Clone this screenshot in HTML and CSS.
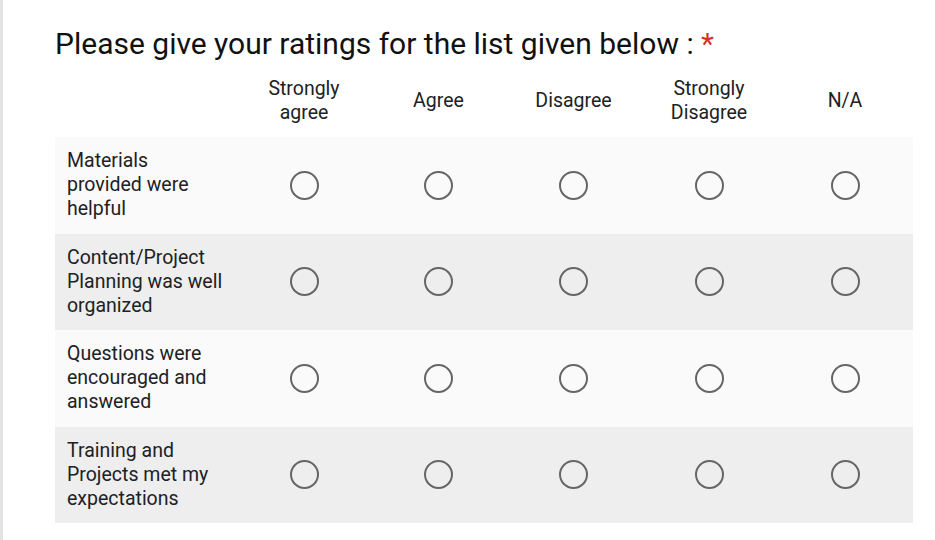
FILE: index.html
```html
<!DOCTYPE html>
<html>
<head>
<meta charset="utf-8">
<link rel="stylesheet" href="styles.css">
</head>
<body>
<div class="page">
  <h1 class="title">Please give your ratings for the list given below : <span class="req">*</span></h1>
  <div class="grid">
    <div class="head">
      <div class="cell label"></div>
      <div class="cell">Strongly<br>agree</div>
      <div class="cell">Agree</div>
      <div class="cell">Disagree</div>
      <div class="cell">Strongly<br>Disagree</div>
      <div class="cell">N/A</div>
    </div>
    <div class="row light">
      <div class="cell label">Materials<br>provided were<br>helpful</div>
      <div class="cell"><span class="radio"></span></div>
      <div class="cell"><span class="radio"></span></div>
      <div class="cell"><span class="radio"></span></div>
      <div class="cell"><span class="radio"></span></div>
      <div class="cell"><span class="radio"></span></div>
    </div>
    <div class="row dark">
      <div class="cell label">Content/Project<br>Planning was well<br>organized</div>
      <div class="cell"><span class="radio"></span></div>
      <div class="cell"><span class="radio"></span></div>
      <div class="cell"><span class="radio"></span></div>
      <div class="cell"><span class="radio"></span></div>
      <div class="cell"><span class="radio"></span></div>
    </div>
    <div class="row light">
      <div class="cell label">Questions were<br>encouraged and<br>answered</div>
      <div class="cell"><span class="radio"></span></div>
      <div class="cell"><span class="radio"></span></div>
      <div class="cell"><span class="radio"></span></div>
      <div class="cell"><span class="radio"></span></div>
      <div class="cell"><span class="radio"></span></div>
    </div>
    <div class="row dark">
      <div class="cell label">Training and<br>Projects met my<br>expectations</div>
      <div class="cell"><span class="radio"></span></div>
      <div class="cell"><span class="radio"></span></div>
      <div class="cell"><span class="radio"></span></div>
      <div class="cell"><span class="radio"></span></div>
      <div class="cell"><span class="radio"></span></div>
    </div>
  </div>
</div>
</body>
</html>
```
FILE: styles.css
```css
html, body {
  margin: 0;
  padding: 0;
  background: #ffffff;
}
body {
  font-family: Roboto, "Liberation Sans", sans-serif;
  color: #202124;
  width: 935px;
  height: 540px;
  overflow: hidden;
}
.page {
  border-left: 3px solid #e2e2e2;
  height: 540px;
  box-sizing: border-box;
  padding: 25px 0 0 52px;
}
.title {
  margin: 0;
  font-size: 30px;
  font-weight: 400;
  line-height: 38px;
  color: #111;
}
.req {
  color: #d93025;
}
.grid {
  width: 858px;
}
.head, .row {
  display: grid;
  grid-template-columns: 182px 134px 135px 135px 136px 136px;
  align-items: center;
  font-size: 19.5px;
  line-height: 24px;
}
.head {
  height: 74px;
  padding-top: 1px;
  box-sizing: border-box;
  text-align: center;
}
.row {
  height: 96.5px;
}
.row.light { background: #fafafa; }
.row.dark { background: #eeeeee; }
.cell {
  display: flex;
  justify-content: center;
  align-items: center;
}
.row .label, .head .label {
  justify-content: flex-start;
  padding-left: 12px;
}
.radio {
  display: block;
  width: 25px;
  height: 25px;
  border: 2.5px solid #666666;
  border-radius: 50%;
  box-sizing: content-box;
}
```
